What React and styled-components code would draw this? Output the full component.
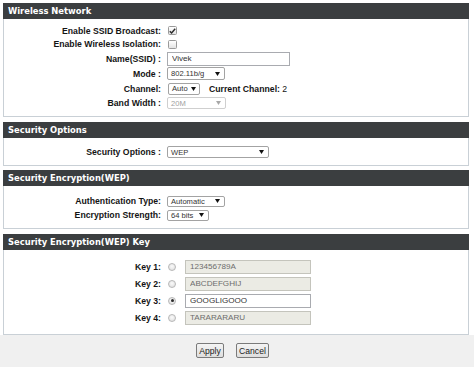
import React from 'react';
import styled, { createGlobalStyle } from 'styled-components';

const Global = createGlobalStyle`
  html, body { margin: 0; padding: 0; background: #ffffff; }
  body { font-family: "Liberation Sans", Arial, sans-serif; color: #1a1a1a; }
  * { box-sizing: border-box; }
`;

const Page = styled.div`
  width: 474px;
  height: 367px;
  display: flex;
  flex-direction: column;
  background: #ffffff;
`;

const Panels = styled.div`
  display: flex;
  flex-direction: column;
  padding: 3px 5px 0 3px;
`;

const Panel = styled.section`
  display: flex;
  flex-direction: column;
  margin-top: ${p => p.$gap || 0}px;
`;

const Header = styled.div`
  height: 16px;
  background: #3b3e40;
  color: #ffffff;
  font-family: "DejaVu Sans", Verdana, sans-serif;
  font-weight: bold;
  font-size: 8.4px;
  line-height: 16px;
  padding-left: 5px;
  white-space: nowrap;
`;

const Body = styled.div`
  border: 1px solid #c9d0d6;
  border-top: none;
  background: #ffffff;
  padding: ${p => p.$pt}px 0 ${p => p.$pb}px 0;
  display: flex;
  flex-direction: column;
`;

const Row = styled.div`
  display: grid;
  grid-template-columns: 157px auto;
  column-gap: 6px;
  align-items: center;
  height: ${p => p.$h}px;
`;

const Label = styled.span`
  text-align: right;
  font-weight: bold;
  font-size: 8.7px;
  color: #141414;
  white-space: nowrap;
`;

const Controls = styled.div`
  display: flex;
  align-items: center;
  gap: ${p => p.$gap || 0}px;
`;

const TextInput = styled.input`
  width: ${p => p.$w}px;
  height: 14px;
  border: 1px solid ${p => (p.disabled ? '#c4c4bc' : '#a9abb0')};
  background: ${p => (p.disabled ? '#ebebe4' : '#ffffff')};
  color: ${p => (p.disabled ? '#6d6d6d' : '#333333')};
  font-family: "Liberation Sans", Arial, sans-serif;
  font-size: 8.1px;
  padding: 0 4px;
  margin: 0;
  outline: none;
  &:disabled { -webkit-text-fill-color: #6d6d6d; opacity: 1; }
`;

const SelectBox = styled.span`
  display: inline-flex;
  align-items: center;
  justify-content: space-between;
  gap: 3px;
  width: ${p => p.$w}px;
  height: ${p => p.$h || 12}px;
  border: 1px solid ${p => (p.$disabled ? '#cfcfcf' : '#a3a3a3')};
  border-radius: 2px;
  background: #ffffff;
  color: ${p => (p.$disabled ? '#a0a0a0' : '#333333')};
  font-size: 7.6px;
  padding: 0 4px 0 3px;
  white-space: nowrap;
  margin-left: ${p => p.$ml || 0}px;
  svg { flex-shrink: 0; }
`;

const Arrow = ({ disabled }) => (
  <svg width="5" height="4" viewBox="0 0 5 4">
    <path d="M0 0 L5 0 L2.5 4 Z" fill={disabled ? '#a8a8a8' : '#111111'} />
  </svg>
);

const Select = ({ value, w, h, disabled, ml }) => (
  <SelectBox $w={w} $h={h} $disabled={disabled} $ml={ml}>
    <span>{value}</span>
    <Arrow disabled={disabled} />
  </SelectBox>
);

const CheckBox = styled.span`
  width: 9px;
  height: 9px;
  margin-left: 1px;
  border: 1px solid #9a9a9a;
  border-radius: 1.5px;
  background: linear-gradient(#ffffff, #e4e4e4);
  display: inline-flex;
  align-items: center;
  justify-content: center;
`;

const Check = ({ checked }) => (
  <CheckBox>
    {checked && (
      <svg width="7" height="6" viewBox="0 0 7 6">
        <path d="M0.8 3.2 L2.6 5 L6.2 0.8" fill="none" stroke="#2a2a2a" strokeWidth="1.4" />
      </svg>
    )}
  </CheckBox>
);

const RadioDot = styled.span`
  width: 8px;
  height: 8px;
  margin-left: 1px;
  border-radius: 50%;
  border: 1px solid #b8b8b8;
  background: radial-gradient(circle at 50% 40%, #fafafa, #dcdcdc);
  display: inline-flex;
  align-items: center;
  justify-content: center;
  &::after {
    content: '';
    width: 3px;
    height: 3px;
    border-radius: 50%;
    background: ${p => (p.$on ? '#2b2b2b' : 'transparent')};
  }
`;

const Inline = styled.span`
  font-size: 8.7px;
  white-space: nowrap;
  color: #141414;
  margin-left: ${p => p.$ml || 0}px;
  b { font-weight: bold; }
`;

const ButtonBar = styled.div`
  flex: 1;
  background: #f0f0f0;
  display: flex;
  justify-content: center;
  align-items: flex-start;
  gap: 12px;
  padding: 8px 9px 0 0;
`;

const Button = styled.button`
  width: ${p => p.$w}px;
  height: 15px;
  padding: 0;
  border: 1px solid #7a7a7a;
  border-radius: 2px;
  background: linear-gradient(#f4f4f4, #dedede);
  font-family: "Liberation Sans", Arial, sans-serif;
  font-size: 8.6px;
  color: #222222;
`;

const keys = [
  { n: 1, v: '123456789A', on: false },
  { n: 2, v: 'ABCDEFGHIJ', on: false },
  { n: 3, v: 'GOOGLIGOOO', on: true },
  { n: 4, v: 'TARARARARU', on: false },
];

export default function App() {
  return (
    <Page>
      <Global />
      <Panels>
        <Panel>
          <Header>Wireless Network</Header>
          <Body $pt={5} $pb={6}>
            <Row $h={13}>
              <Label>Enable SSID Broadcast:</Label>
              <Controls><Check checked /></Controls>
            </Row>
            <Row $h={14}>
              <Label>Enable Wireless Isolation:</Label>
              <Controls><Check /></Controls>
            </Row>
            <Row $h={15}>
              <Label>Name(SSID) :</Label>
              <Controls><TextInput $w={123} defaultValue="Vivek" /></Controls>
            </Row>
            <Row $h={15}>
              <Label>Mode :</Label>
              <Controls><Select value="802.11b/g" w={58} h={13} /></Controls>
            </Row>
            <Row $h={15}>
              <Label>Channel:</Label>
              <Controls>
                <Select value="Auto" w={32} h={12} ml={1} />
                <Inline $ml={9}><b>Current Channel:</b> 2</Inline>
              </Controls>
            </Row>
            <Row $h={14}>
              <Label>Band Width :</Label>
              <Controls><Select value="20M" w={59} h={12} disabled /></Controls>
            </Row>
          </Body>
        </Panel>

        <Panel $gap={5}>
          <Header>Security Options</Header>
          <Body $pt={7} $pb={6}>
            <Row $h={14}>
              <Label>Security Options :</Label>
              <Controls><Select value="WEP" w={102} h={12} /></Controls>
            </Row>
          </Body>
        </Panel>

        <Panel $gap={4}>
          <Header>Security Encryption(WEP)</Header>
          <Body $pt={8} $pb={6}>
            <Row $h={14}>
              <Label>Authentication Type:</Label>
              <Controls><Select value="Automatic" w={58} h={11} /></Controls>
            </Row>
            <Row $h={14}>
              <Label>Encryption Strength:</Label>
              <Controls><Select value="64 bits" w={42} h={11} /></Controls>
            </Row>
          </Body>
        </Panel>

        <Panel $gap={5}>
          <Header>Security Encryption(WEP) Key</Header>
          <Body $pt={8} $pb={8}>
            {keys.map(k => (
              <Row $h={17} key={k.n}>
                <Label>Key {k.n}:</Label>
                <Controls $gap={9}>
                  <RadioDot $on={k.on} />
                  <TextInput $w={126} defaultValue={k.v} disabled={!k.on} />
                </Controls>
              </Row>
            ))}
          </Body>
        </Panel>
      </Panels>
      <ButtonBar>
        <Button $w={28}>Apply</Button>
        <Button $w={33}>Cancel</Button>
      </ButtonBar>
    </Page>
  );
}
